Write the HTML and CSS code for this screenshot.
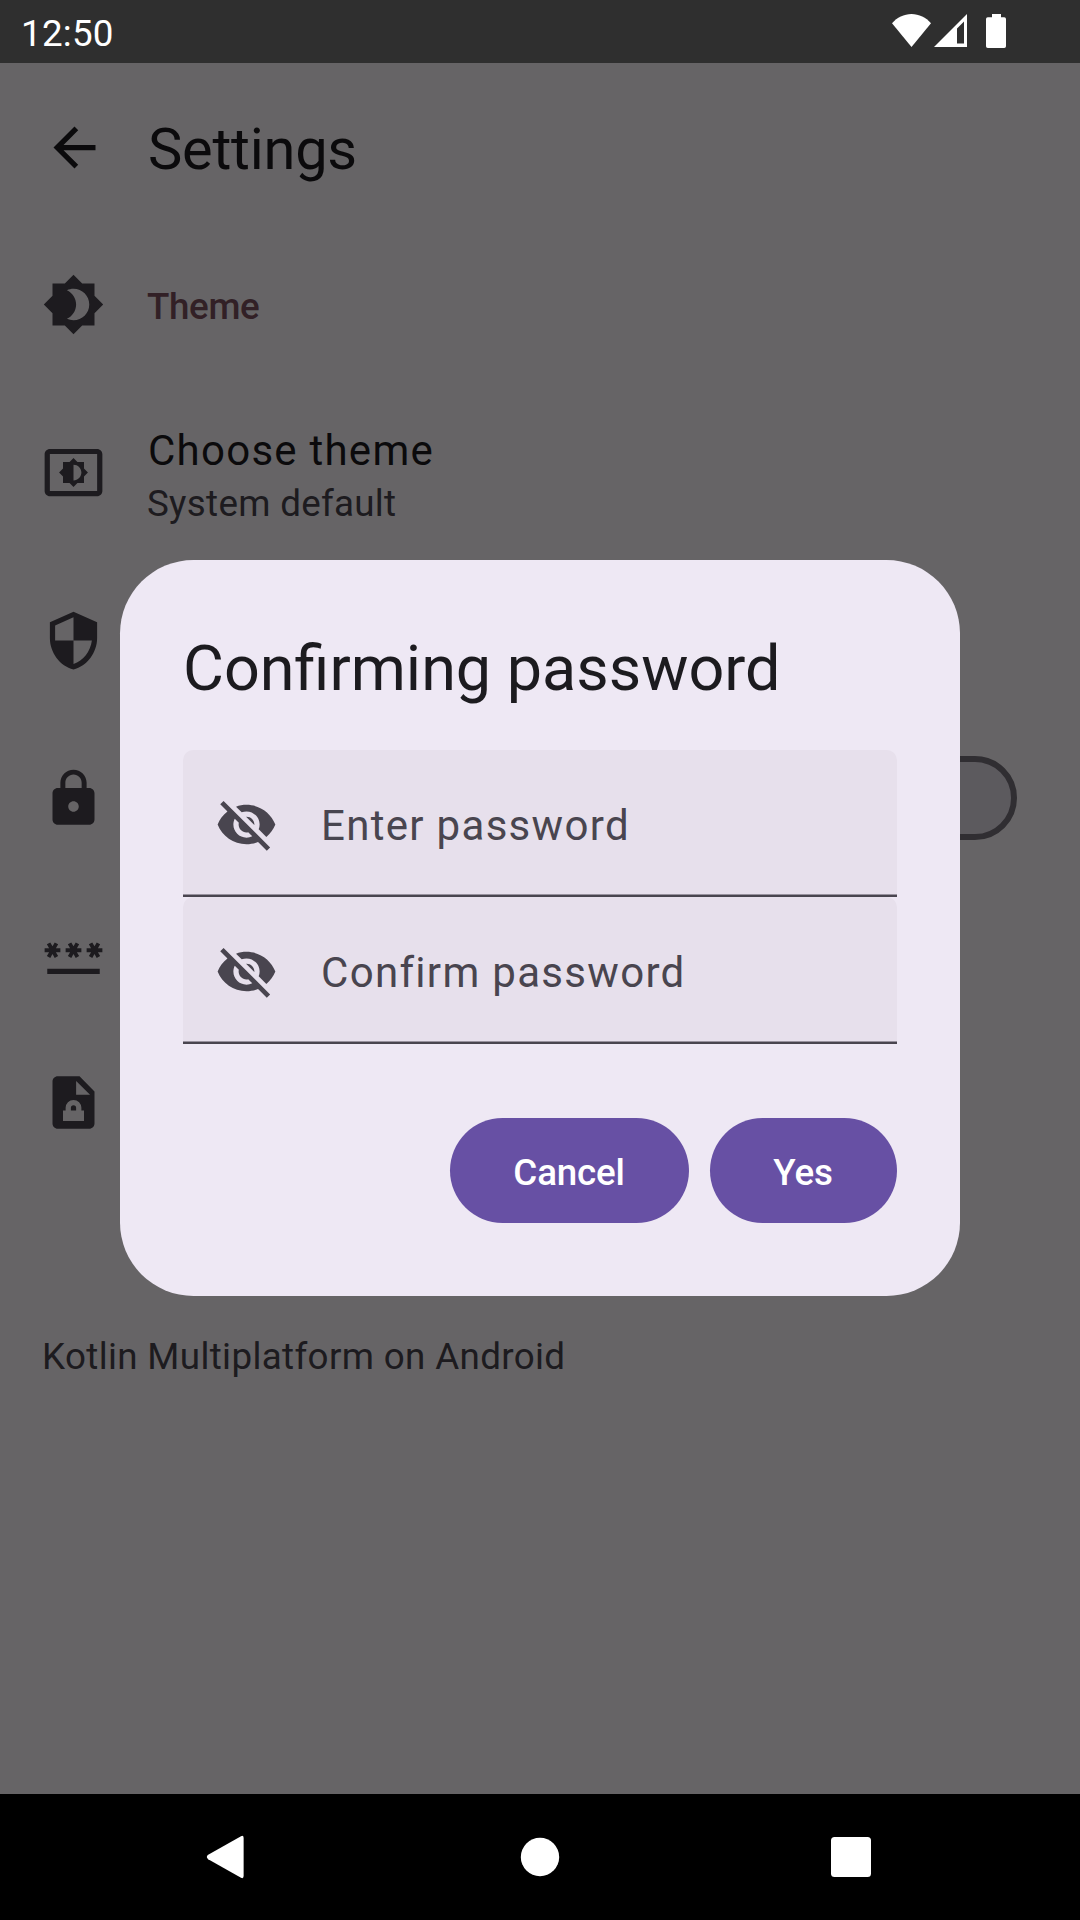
FILE: index.html
```html
<!DOCTYPE html>
<html lang="en">
<head>
<meta charset="utf-8">
<title>Settings</title>
<link rel="stylesheet" href="styles.css">
</head>
<body>
<div class="device">
  <header class="status-bar">
    <span class="clock">12:50</span>
    <div class="status-icons">
      <svg class="wifi" viewBox="0 0 39 33"><path d="M0 9.2C5 3.5 12 0 19.5 0S34 3.5 39 9.2L19.5 33z"/></svg>
      <svg class="signal" viewBox="0 0 33 33"><path fill-rule="evenodd" d="M0 33L33 0v33zM23 14.6V29.4h7V7.6z"/></svg>
      <svg class="battery" viewBox="0 0 20 34"><path d="M6 0h9v3.3h3.2Q20 3.3 20 5.1V32.2Q20 34 18.2 34H1.8Q0 34 0 32.2V5.1Q0 3.3 1.8 3.3H6z"/></svg>
    </div>
  </header>

  <main class="screen">
    <div class="app-bar">
      <svg class="icon back" viewBox="0 0 24 24"><path d="M20 11H7.83l5.59-5.59L12 4l-8 8 8 8 1.41-1.41L7.83 13H20v-2z"/></svg>
      <h1 class="app-title">Settings</h1>
    </div>

    <div class="row">
      <svg class="icon" viewBox="0 0 24 24"><path d="M20 8.69V4h-4.69L12 .69 8.69 4H4v4.69L.69 12 4 15.31V20h4.69L12 23.31 15.31 20H20v-4.69L23.31 12 20 8.69zM12 18c-.89 0-1.74-.2-2.5-.55C11.56 16.5 13 14.42 13 12s-1.44-4.5-3.5-5.45C10.26 6.2 11.11 6 12 6c3.31 0 6 2.69 6 6s-2.69 6-6 6z"/></svg>
      <span class="section-label">Theme</span>
    </div>

    <div class="row row-two-line">
      <svg class="icon" viewBox="0 0 24 24"><path d="M21 3H3c-1.1 0-2 .9-2 2v14c0 1.1.9 2 2 2h18c1.1 0 2-.9 2-2V5c0-1.1-.9-2-2-2zm0 16.01H3V4.99h18v14.02zM8 16h2.5l1.5 1.5 1.5-1.5H16v-2.5l1.5-1.5-1.5-1.5V8h-2.5L12 6.5 10.5 8H8v2.5L6.5 12 8 13.5V16zm4-7c1.66 0 3 1.34 3 3s-1.34 3-3 3V9z"/></svg>
      <div class="row-text">
        <span class="row-title">Choose theme</span>
        <span class="row-value">System default</span>
      </div>
    </div>

    <div class="row">
      <svg class="icon" viewBox="0 0 24 24"><path d="M12 1L3 5v6c0 5.55 3.84 10.74 9 12 5.16-1.26 9-6.45 9-12V5l-9-4zm0 10.99h7c-.53 4.12-3.28 7.79-7 8.94V12H5V6.3l7-3.11v8.8z"/></svg>
    </div>

    <div class="row row-switch">
      <svg class="icon" viewBox="0 0 24 24"><path d="M18 8h-1V6c0-2.76-2.24-5-5-5S7 3.24 7 6v2H6c-1.1 0-2 .9-2 2v10c0 1.1.9 2 2 2h12c1.1 0 2-.9 2-2V10c0-1.1-.9-2-2-2zm-6 9c-1.1 0-2-.9-2-2s.9-2 2-2 2 .9 2 2-.9 2-2 2zm3.1-9H8.9V6c0-1.71 1.39-3.1 3.1-3.1 1.71 0 3.1 1.39 3.1 3.1v2z"/></svg>
      <div class="switch"></div>
    </div>

    <div class="row">
      <svg class="icon" viewBox="0 0 24 24"><path d="M2 17h20v2H2v-2zm1.15-4.05L4 11.47l.85 1.48 1.3-.75-.85-1.48H7v-1.5H5.3l.85-1.47L4.85 7 4 8.47 3.15 7l-1.3.75.85 1.47H1v1.5h1.7l-.85 1.48 1.3.75zm6.7-.75l1.3.75.85-1.48.85 1.48 1.3-.75-.85-1.48H15v-1.5h-1.7l.85-1.47-1.3-.75L12 8.47 11.15 7l-1.3.75.85 1.47H9v1.5h1.7l-.85 1.48zM23 9.22h-1.7l.85-1.47-1.3-.75L20 8.47 19.15 7l-1.3.75.85 1.47H17v1.5h1.7l-.85 1.48 1.3.75.85-1.48.85 1.48 1.3-.75-.85-1.48H23v-1.5z"/></svg>
    </div>

    <div class="row">
      <svg class="icon" viewBox="0 0 24 24"><path fill-rule="evenodd" d="M14.3 2H6c-1.1 0-2 .9-2 2v16c0 1.1.9 2 2 2h12c1.1 0 2-.9 2-2V7.8L14.3 2zM13 9V3.8L18.3 9H13zM8 19v-4h1v-1a3 3 0 0 1 6 0v1h1v4H8zm3-4h2v-1a1 1 0 0 0-2 0v1z"/></svg>
    </div>

    <p class="platform">Kotlin Multiplatform on Android</p>

    <div class="scrim">
      <section class="dialog">
        <h2 class="dialog-title">Confirming password</h2>
        <div class="field">
          <svg class="icon" viewBox="0 0 24 24"><path d="M12 7c2.76 0 5 2.24 5 5 0 .65-.13 1.26-.36 1.83l2.92 2.92c1.51-1.26 2.7-2.89 3.43-4.75-1.73-4.39-6-7.5-11-7.5-1.4 0-2.74.25-3.98.7l2.16 2.16C10.74 7.13 11.35 7 12 7zM2 4.27l2.28 2.28.46.46C3.08 8.3 1.78 10.02 1 12c1.73 4.39 6 7.5 11 7.5 1.55 0 3.03-.3 4.38-.84l.42.42L19.73 22 21 20.73 3.27 3 2 4.27zM7.53 9.8l1.55 1.55c-.05.21-.08.43-.08.65 0 1.66 1.34 3 3 3 .22 0 .44-.03.65-.08l1.55 1.55c-.67.33-1.41.53-2.2.53-2.76 0-5-2.24-5-5 0-.79.2-1.53.53-2.2zm4.31-.78l3.15 3.15.02-.16c0-1.66-1.34-3-3-3l-.17.01z"/></svg>
          <span class="field-label">Enter password</span>
        </div>
        <div class="field">
          <svg class="icon" viewBox="0 0 24 24"><path d="M12 7c2.76 0 5 2.24 5 5 0 .65-.13 1.26-.36 1.83l2.92 2.92c1.51-1.26 2.7-2.89 3.43-4.75-1.73-4.39-6-7.5-11-7.5-1.4 0-2.74.25-3.98.7l2.16 2.16C10.74 7.13 11.35 7 12 7zM2 4.27l2.28 2.28.46.46C3.08 8.3 1.78 10.02 1 12c1.73 4.39 6 7.5 11 7.5 1.55 0 3.03-.3 4.38-.84l.42.42L19.73 22 21 20.73 3.27 3 2 4.27zM7.53 9.8l1.55 1.55c-.05.21-.08.43-.08.65 0 1.66 1.34 3 3 3 .22 0 .44-.03.65-.08l1.55 1.55c-.67.33-1.41.53-2.2.53-2.76 0-5-2.24-5-5 0-.79.2-1.53.53-2.2zm4.31-.78l3.15 3.15.02-.16c0-1.66-1.34-3-3-3l-.17.01z"/></svg>
          <span class="field-label">Confirm password</span>
        </div>
        <div class="actions">
          <button class="button cancel">Cancel</button>
          <button class="button yes">Yes</button>
        </div>
      </section>
    </div>
  </main>

  <nav class="nav-bar">
    <svg class="nav-icon" viewBox="0 0 44 44"><path d="M36 1.2Q38.6 0 38.6 3V41Q38.6 44 36 42.8L3.2 24.2Q.4 22 3.2 19.8z"/></svg>
    <svg class="nav-icon" viewBox="0 0 44 44"><circle cx="23" cy="22" r="19.2"/></svg>
    <svg class="nav-icon" viewBox="0 0 44 44"><rect x="2" y="2" width="40" height="40" rx="3.5"/></svg>
  </nav>
</div>
</body>
</html>
```

FILE: styles.css
```css
* {
  box-sizing: border-box;
  margin: 0;
}

body {
  font-family: Roboto, sans-serif;
}

.device {
  display: flex;
  flex-direction: column;
  width: 1080px;
  height: 1920px;
  overflow: hidden;
}

svg {
  display: block;
  flex: none;
}

/* System status bar */
.status-bar {
  display: flex;
  justify-content: space-between;
  height: 63px;
  padding: 0 74px 0 21px;
  background: #2f2f2f;
  color: #fff;
}

.clock {
  font-size: 36.75px;
  letter-spacing: 0.25px;
  line-height: 67px;
}

.status-icons {
  display: flex;
  align-items: flex-start;
  padding-top: 14px;
  fill: #fff;
}

.wifi {
  width: 39px;
  height: 33px;
}

.signal {
  width: 33px;
  height: 33px;
  margin-left: 3px;
}

.battery {
  width: 20px;
  height: 34px;
  margin-left: 19px;
}

/* Settings screen */
.screen {
  position: relative;
  height: 1731px;
  background: #fffbfe;
  color: #1c1b1f;
}

.icon {
  width: 63px;
  height: 63px;
  fill: #49454f;
}

.app-bar {
  display: flex;
  align-items: center;
  gap: 42px;
  height: 168px;
  padding-left: 43px;
}

.back {
  fill: #1c1b1f;
}

.app-title {
  padding-top: 4px;
  font-size: 57.75px;
  font-weight: 400;
  letter-spacing: -0.25px;
  line-height: 73px;
}

.row {
  display: flex;
  align-items: center;
  gap: 42px;
  height: 147px;
  padding: 0 63px 0 42px;
}

.row-two-line {
  height: 189px;
}

.row-switch {
  justify-content: space-between;
  height: 168px;
}

.section-label {
  padding-top: 5px;
  color: #7d5260;
  font-size: 36.75px;
  font-weight: 500;
  letter-spacing: -0.35px;
  line-height: 52px;
}

.row-text {
  display: flex;
  flex-direction: column;
}

.row-title {
  padding: 0 0 2px 1px;
  font-size: 42px;
  letter-spacing: 1.25px;
  line-height: 59px;
}

.row-value {
  padding-top: 1px;
  color: #49454f;
  font-size: 36.75px;
  letter-spacing: 0.3px;
  line-height: 42px;
}

.switch {
  width: 137px;
  height: 84px;
  border: 6px solid #79747e;
  border-radius: 42px;
  background: #e7e0ec;
}

.platform {
  padding: 155px 42px 0;
  color: #49454f;
  font-size: 36.75px;
  letter-spacing: 0.36px;
  line-height: 52px;
}

/* Password dialog */
.scrim {
  position: absolute;
  inset: 0;
  display: flex;
  justify-content: center;
  align-items: flex-start;
  padding-top: 497px;
  background: rgba(0, 0, 0, 0.6);
}

.dialog {
  width: 840px;
  height: 736px;
  padding: 67px 63px 63px;
  border-radius: 73.5px;
  background: #eee8f4;
}

.dialog-title {
  margin-bottom: 39px;
  font-size: 62.9px;
  font-weight: 400;
  line-height: 84px;
}

.field {
  display: flex;
  align-items: center;
  gap: 43px;
  height: 147px;
  padding: 1px 0 0 32px;
  border-radius: 10.5px 10.5px 0 0;
  background: linear-gradient(#49454f, #49454f) 0 100% / 100% 2px no-repeat,
    linear-gradient(#98929e, #98929e) 0 100% / 100% 3px no-repeat, #e7e0ec;
}

.field-label {
  padding-top: 3px;
  color: #49454f;
  font-size: 42px;
  letter-spacing: 1.31px;
  line-height: 63px;
}

.actions {
  display: flex;
  justify-content: flex-end;
  gap: 21px;
  margin-top: 74px;
}

.button {
  height: 105px;
  padding: 5px 0 0;
  border: 0;
  border-radius: 52.5px;
  background: #6750a4;
  color: #fff;
  font: 500 36.75px/52px Roboto, sans-serif;
  letter-spacing: -0.2px;
}

.cancel {
  width: 239px;
  padding-right: 1px;
}

.yes {
  width: 187px;
  padding-right: 1px;
}

/* System navigation bar */
.nav-bar {
  display: flex;
  justify-content: space-between;
  align-items: center;
  height: 126px;
  padding: 0 207px 0 205px;
  background: #000;
}

.nav-icon {
  width: 44px;
  height: 44px;
  fill: #fff;
}
```
